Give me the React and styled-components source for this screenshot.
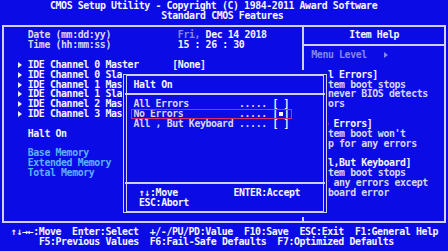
import React from "react";
import { styled, createGlobalStyle } from "styled-components";

// 80x25 text screen: one cell is CW wide and RH high
const CW = 5.56;
const RH = 9.83;
const col = (n) => `${(n * CW).toFixed(2)}px`;
const row = (n) => `${(n * RH).toFixed(2)}px`;

const BLUE = "#0b0be6";
const LINE = "#cfcfef";
const WHITE = "#f4f4ff";
const SOFT = "#d6d6ee";
const DIM = "#8686ee";
const CYAN = "#5cb0ff";

const GlobalStyle = createGlobalStyle`
  html, body {
    margin: 0;
    padding: 0;
    background: ${BLUE};
    overflow: hidden;
  }
`;

const Screen = styled.div`
  position: relative;
  width: 448px;
  height: 251px;
  box-sizing: border-box;
  padding-top: 1px;
  background: ${BLUE};
  color: ${WHITE};
  font-family: "DejaVu Sans Mono", "Liberation Mono", monospace;
  font-weight: bold;
  font-size: 9.9px;
  letter-spacing: -0.4px;
  line-height: ${row(1)};
`;

const Line = styled.div`
  height: ${row(1)};
  white-space: pre;
  padding-left: ${(p) => col(p.$col || 0)};
  color: ${(p) => p.$color || "inherit"};
`;

const Spacer = styled.div`
  height: ${(p) => row(p.$rows || 1)};
  flex-shrink: 0;
`;

const MainBox = styled.div`
  position: relative;
  height: ${row(21)};
  box-sizing: border-box;
  padding: ${row(1)} ${col(1)};
  display: flex;

  &::before {
    content: "";
    position: absolute;
    top: ${RH / 2 - 1}px;
    bottom: ${RH / 2 - 1}px;
    left: ${CW / 2 - 1}px;
    right: ${CW / 2 - 1}px;
    border: 2px solid ${LINE};
    pointer-events: none;
  }
`;

const LeftPanel = styled.div`
  width: ${col(53)};
  display: flex;
  flex-direction: column;
`;

const HelpPanel = styled.div`
  position: relative;
  flex: 1;
  display: flex;
  flex-direction: column;

  &::before {
    content: "";
    position: absolute;
    top: -${RH / 2 + 1}px;
    bottom: -${RH / 2 + 1}px;
    left: ${CW / 2 - 1}px;
    border-left: 2px solid ${LINE};
  }
`;

const Rule = styled.div`
  position: relative;
  height: ${row(1)};
  flex-shrink: 0;

  &::after {
    content: "";
    position: absolute;
    top: ${RH / 2 - 1}px;
    left: ${(p) => col(p.$from)};
    right: ${(p) => col(p.$to)};
    border-top: 2px solid ${LINE};
  }
`;

const Field = styled.div`
  display: grid;
  grid-template-columns: ${col(2)} ${col(26)} 1fr;
  padding-left: ${col(2)};
  height: ${row(1)};
  white-space: pre;
  color: ${(p) => p.$color || SOFT};
`;

const Arrow = styled.span`
  align-self: center;
  width: 0;
  height: 0;
  margin-left: 1px;
  border-left: 4px solid ${(p) => p.$color || WHITE};
  border-top: 3px solid transparent;
  border-bottom: 3px solid transparent;
`;

const Value = styled.span`
  color: ${WHITE};
`;

const Dim = styled.span`
  color: ${DIM};
`;

const HelpTitle = styled.div`
  height: ${row(1)};
  padding-left: ${col(1)};
  text-align: center;
  color: ${WHITE};
`;

const HelpLine = styled.div`
  display: flex;
  align-items: center;
  height: ${row(1)};
  white-space: pre;
  padding-left: ${col(2)};
  color: ${(p) => (p.$head ? WHITE : p.$dim ? DIM : SOFT)};
`;

const Popup = styled.div`
  position: absolute;
  top: ${(1 + 7 * RH).toFixed(2)}px;
  left: ${col(22)};
  width: ${col(37)};
  height: ${row(15)};
  box-sizing: border-box;
  padding: ${row(1)} ${col(1)};
  background: ${BLUE};
  display: flex;
  flex-direction: column;

  &::before {
    content: "";
    position: absolute;
    top: ${RH / 2 - 1}px;
    bottom: ${RH / 2 - 1}px;
    left: ${CW / 2 - 2}px;
    right: ${CW / 2 - 2}px;
    border-top: 2px solid ${LINE};
    border-bottom: 2px solid ${LINE};
    border-left: 4px double ${LINE};
    border-right: 4px double ${LINE};
    pointer-events: none;
  }
`;

const PopupTitle = styled.div`
  height: ${row(1)};
  padding-left: ${col(1)};
  color: ${WHITE};
`;

const Option = styled.div`
  display: grid;
  grid-template-columns: ${col(19)} ${col(6)} ${col(3)};
  box-sizing: border-box;
  width: ${col(29)};
  height: ${row(1)};
  margin-left: ${col(0.5)};
  padding-left: ${col(0.5)};
  white-space: pre;
  color: ${SOFT};
  outline: ${(p) => (p.$selected ? "1px solid #d0306c" : "none")};
  outline-offset: -1px;
`;

const Mark = styled.span`
  display: grid;
  grid-template-columns: repeat(3, ${col(1)});
  align-items: center;
  justify-items: center;
  color: ${WHITE};
`;

const Dot = styled.i`
  width: 4px;
  height: 4px;
  background: ${(p) => (p.$on ? WHITE : "transparent")};
`;

const KeyRow = styled.div`
  display: grid;
  grid-template-columns: ${col(17)} 1fr;
  height: ${row(1)};
  padding-left: ${col(2)};
  white-space: pre;
  color: ${WHITE};
`;

const channels = [
  { name: "IDE Channel 0 Master", value: "[None]" },
  { name: "IDE Channel 0 Slave" },
  { name: "IDE Channel 1 Master" },
  { name: "IDE Channel 1 Slave" },
  { name: "IDE Channel 2 Master" },
  { name: "IDE Channel 3 Master" },
];

const help = [
  { text: "[All Errors]", head: true },
  { text: "System boot stops" },
  { text: "whenever BIOS detects" },
  { text: "errors" },
  { text: "" },
  { text: "[No Errors]", head: true },
  { text: "System boot won't" },
  { text: "stop for any errors" },
  { text: "" },
  { text: "[All,But Keyboard]", head: true },
  { text: "System boot stops" },
  { text: "for any errors except" },
  { text: "keyboard error" },
];

const options = [
  { label: "All Errors" },
  { label: "No Errors", selected: true },
  { label: "All , But Keyboard" },
];

const App = () => {
  return (
    <>
      <GlobalStyle />
      <Screen>
        <Line $col={9}>CMOS Setup Utility - Copyright (C) 1984-2011 Award Software</Line>
        <Line $col={29}>Standard CMOS Features</Line>

        <MainBox>
          <LeftPanel>
            <Field>
              <span />
              <span>Date (mm:dd:yy)</span>
              <Value> <Dim>Fri,</Dim> Dec 14 2018</Value>
            </Field>
            <Field>
              <span />
              <span>Time (hh:mm:ss)</span>
              <Value> 15 : 26 : 30</Value>
            </Field>
            <Spacer />
            {channels.map((c) => (
              <Field key={c.name} $color={WHITE}>
                <Arrow />
                <span>{c.name}</span>
                {c.value && <Value>{c.value}</Value>}
              </Field>
            ))}
            <Spacer />
            <Field $color={WHITE}>
              <span />
              <span>Halt On</span>
            </Field>
            <Spacer />
            <Field $color={CYAN}>
              <span />
              <span>Base Memory</span>
            </Field>
            <Field $color={CYAN}>
              <span />
              <span>Extended Memory</span>
            </Field>
            <Field $color={CYAN}>
              <span />
              <span>Total Memory</span>
            </Field>
          </LeftPanel>

          <HelpPanel>
            <HelpTitle>Item Help</HelpTitle>
            <Rule $from={0.5} $to={-0.5} />
            <HelpLine $dim>
              Menu Level{"   "}
              <Arrow $color={DIM} />
            </HelpLine>
            <Spacer />
            {help.map((h, i) => (
              <HelpLine key={i} $head={h.head}>{h.text}</HelpLine>
            ))}
          </HelpPanel>
        </MainBox>

        <Line $col={2}>↑↓→←:Move  Enter:Select  +/-/PU/PD:Value  F10:Save  ESC:Exit  F1:General Help</Line>
        <Line $col={7}>F5:Previous Values  F6:Fail-Safe Defaults  F7:Optimized Defaults</Line>

        <Popup>
          <PopupTitle>Halt On</PopupTitle>
          <Rule $from={-0.5} $to={-0.5} />
          {options.map((o) => (
            <Option key={o.label} $selected={o.selected}>
              <span>{o.label}</span>
              <span>.....</span>
              <Mark>
                <span>[</span>
                <Dot $on={o.selected} />
                <span>]</span>
              </Mark>
            </Option>
          ))}
          <Spacer $rows={5} />
          <Rule $from={-0.5} $to={-0.5} />
          <KeyRow>
            <span>↑↓:Move</span>
            <span>ENTER:Accept</span>
          </KeyRow>
          <KeyRow>
            <span>ESC:Abort</span>
          </KeyRow>
        </Popup>
      </Screen>
    </>
  );
};

export default App;
